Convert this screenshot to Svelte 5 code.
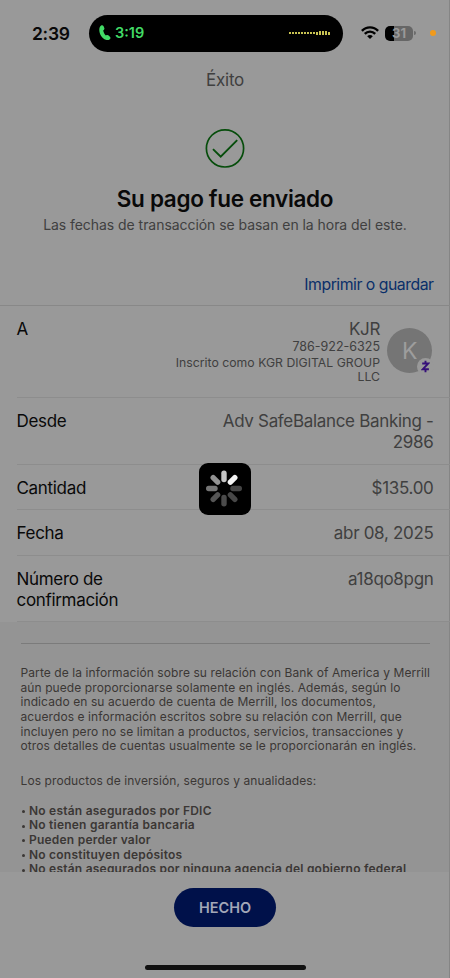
<script>
  const bars = [2, 2, 2, 2, 2, 2, 2, 2.4, 2.4, 3, 3.6, 3.6, 3.4, 3];
  const spokes = ['#c4c4c4', '#f4f4f4', '#444', '#474747', '#4b4b4b', '#555', '#757575', '#929292'];
  const rows = [
    { label: ['Desde'], value: ['Adv SafeBalance Banking -', '2986'], height: 67 },
    { label: ['Cantidad'], value: ['$135.00'], height: 45 },
    { label: ['Fecha'], value: ['abr 08, 2025'], height: 46 },
    { label: ['Número de', 'confirmación'], value: ['a18qo8pgn'], height: 66 }
  ];
  const legal = [
    'Parte de la información sobre su relación con Bank of America y Merrill',
    'aún puede proporcionarse solamente en inglés. Además, según lo',
    'indicado en su acuerdo de cuenta de Merrill, los documentos,',
    'acuerdos e información escritos sobre su relación con Merrill, que',
    'incluyen pero no se limitan a productos, servicios, transacciones y',
    'otros detalles de cuentas usualmente se le proporcionarán en inglés.'
  ];
  const notices = [
    'No están asegurados por FDIC',
    'No tienen garantía bancaria',
    'Pueden perder valor',
    'No constituyen depósitos',
    'No están asegurados por ninguna agencia del gobierno federal'
  ];
</script>

<div class="screen">
  <header class="status">
    <span class="clock">2:39</span>
    <div class="island">
      <svg class="phone" width="12" height="16" viewBox="0 0 12 16">
        <path d="M2.1.6C3-.1 4.1.2 4.6 1.2l.7 1.7c.3.8.1 1.5-.5 2l-.6.5c.3 1.8 1.3 3.7 2.7 5l.8-.3c.7-.3 1.4-.1 1.9.4l1.3 1.3c.8.8.7 1.8-.1 2.4-1 .8-2.500 1.200-4 .6C3 13.300.5 9.500.3 5.200.2 3.200.8 1.500 2.100.6Z" fill="#42db66" />
      </svg>
      <span class="call">3:19</span>
      <div class="wave">
        {#each bars as h}<i style="height: {h}px"></i>{/each}
      </div>
    </div>
    <svg class="wifi" width="18" height="14" viewBox="0 0 18 14" fill="none" stroke="#000" stroke-width="2.4">
      <path d="M.9 4.900C5.400.2 12.600.2 17.100 4.900" />
      <path d="M3.800 7.900c2.900-3.000 7.500-3.000 10.400 0" />
      <path d="M6.200 10.200c1.600-1.500 4-1.500 5.600 0L9 13.100Z" fill="#000" stroke="none" />
    </svg>
    <div class="battery"><span>31</span></div>
    <i class="nub"></i>
    <i class="mic"></i>
  </header>

  <div class="title">Éxito</div>

  <section class="hero">
    <svg width="40" height="40" viewBox="0 0 40 40" fill="none" stroke="#064d0b">
      <circle cx="20" cy="20.400" r="18.600" stroke-width="1.700" />
      <path d="M8 21.100 15.700 28.700 32.200 12.200" stroke-width="1.900" />
    </svg>
    <h1>Su pago fue enviado</h1>
    <p>Las fechas de transacción se basan en la hora del este.</p>
  </section>

  <div class="print"><span>Imprimir o guardar</span></div>

  <section class="details">
    <div class="payee">
      <div class="label">A</div>
      <div class="who">
        <div class="name">KJR</div>
        <div class="tel">786-922-6325</div>
        <div class="enrolled">Inscrito como KGR DIGITAL GROUP<br />LLC</div>
      </div>
      <div class="avatar">
        <span>K</span>
        <div class="zelle">
          <svg width="9" height="13" viewBox="0 0 9 13" fill="none" stroke="#36107a" stroke-width="1.900">
            <path d="M1.200 3.500H7.300L1.700 9.300H7.900" />
            <path d="M4.500.8V3.400M4.500 9.400V12.200" />
          </svg>
        </div>
      </div>
    </div>
    {#each rows as row}
      <div class="row" style="height: {row.height}px">
        <div class="label">{#each row.label as line}<div>{line}</div>{/each}</div>
        <div class="value">{#each row.value as line}<div>{line}</div>{/each}</div>
      </div>
    {/each}
  </section>

  <section class="legal">
    <div class="rule"></div>
    <div class="para">{#each legal as line}<div>{line}</div>{/each}</div>
    <div class="intro">Los productos de inversión, seguros y anualidades:</div>
    <ul>
      {#each notices as n}<li><i></i>{n}</li>{/each}
    </ul>
  </section>

  <footer>
    <button>HECHO</button>
    <div class="home"></div>
  </footer>

  <div class="spinner">
    <svg width="52" height="52" viewBox="0 0 52 52" stroke-width="5.400" stroke-linecap="round">
      {#each spokes as color, i}
        <line x1="25" y1="16.500" x2="25" y2="10.200" stroke={color} transform="rotate({i * 45} 25 25.500)" />
      {/each}
    </svg>
  </div>
</div>

<style>
  .screen {
    position: relative;
    box-sizing: border-box;
    width: 450px;
    height: 978px;
    overflow: hidden;
    display: flex;
    flex-direction: column;
    background: #999;
    color: #090909;
    font-family: Inter, 'Liberation Sans', sans-serif;
    box-shadow: inset -1px 0 #858585;
  }
  .status {
    height: 66px;
    flex: none;
    display: flex;
    align-items: center;
    box-sizing: border-box;
    padding-left: 32px;
  }
  .clock {
    width: 57px;
    font-size: 17.500px;
    font-weight: 600;
    letter-spacing: -0.3px;
    flex: none;
  }
  .island {
    width: 254px;
    height: 37px;
    border-radius: 19px;
    background: #000;
    display: flex;
    align-items: center;
    box-sizing: border-box;
    padding: 0 13px 0 10px;
    flex: none;
  }
  .call {
    margin: -1px 0 0 4px;
    color: #42db66;
    font-size: 14.500px;
    font-weight: 600;
  }
  .wave {
    margin-left: auto;
    display: flex;
    align-items: center;
    gap: 1px;
  }
  .wave i {
    width: 2px;
    background: #c9c353;
  }
  .wifi {
    margin-left: 18px;
    flex: none;
  }
  .battery {
    margin-left: 6px;
    width: 28px;
    height: 15px;
    border-radius: 5px;
    background: linear-gradient(90deg, #000 8.500px, #666 8.500px);
    color: #999;
    font-size: 13px;
    font-weight: 700;
    line-height: 15px;
    text-align: center;
    flex: none;
  }
  .nub {
    margin-left: 1px;
    width: 1.500px;
    height: 4px;
    border-radius: 0 2px 2px 0;
    background: #6b6b6b;
  }
  .mic {
    margin-left: 14px;
    width: 6px;
    height: 6px;
    border-radius: 50%;
    background: #f09a1c;
  }
  .title {
    height: 30px;
    line-height: 29px;
    text-align: center;
    font-size: 17px;
    letter-spacing: -0.2px;
    color: #404040;
  }
  .hero {
    height: 176px;
    flex: none;
    padding-top: 32px;
    box-sizing: border-box;
    display: flex;
    flex-direction: column;
    align-items: center;
  }
  h1 {
    margin: 15.500px 0 0;
    font-size: 22.500px;
    line-height: 30px;
    font-weight: 600;
    letter-spacing: -0.330px;
    white-space: nowrap;
  }
  .hero p {
    margin: 1.500px 0 0;
    font-size: 14px;
    line-height: 20px;
    letter-spacing: -0.050px;
    color: #404040;
    white-space: nowrap;
  }
  .print {
    height: 33px;
    flex: none;
    line-height: 25px;
    padding-right: 16.500px;
    text-align: right;
    font-size: 15.800px;
    letter-spacing: -0.480px;
    color: #0a2f69;
    border-bottom: 1px solid #888;
  }
  .details {
    flex: none;
    font-size: 17px;
    line-height: 20.500px;
    letter-spacing: -0.320px;
  }
  .payee {
    height: 92px;
    box-sizing: border-box;
    margin-left: 16.500px;
    padding: 12.500px 18px 0 0;
    display: flex;
    border-bottom: 1px solid #8d8d8d;
  }
  .who {
    margin-left: auto;
    text-align: right;
    color: #404040;
    white-space: nowrap;
  }
  .tel {
    font-size: 12.500px;
    line-height: 16px;
    letter-spacing: 0;
  }
  .enrolled {
    margin-top: 0.500px;
    font-size: 12.250px;
    line-height: 14.500px;
    letter-spacing: 0;
  }
  .avatar {
    position: relative;
    margin: 9.500px 0 0 7px;
    width: 45px;
    height: 45px;
    border-radius: 50%;
    background: #757575;
    color: #9d9d9d;
    font-size: 23px;
    line-height: 46px;
    text-align: center;
    flex: none;
  }
  .zelle {
    position: absolute;
    left: 30px;
    top: 30px;
    width: 17px;
    height: 17px;
    border-radius: 50%;
    background: #999;
    display: flex;
    align-items: center;
    justify-content: center;
  }
  .row {
    box-sizing: border-box;
    margin-left: 16.500px;
    padding: 13px 16.500px 0 0;
    display: flex;
    justify-content: space-between;
    border-bottom: 1px solid #8d8d8d;
    white-space: nowrap;
  }
  .value {
    color: #404040;
    text-align: right;
  }
  .legal {
    flex: none;
    height: 250px;
    overflow: hidden;
    box-sizing: border-box;
    padding: 21px 20.500px 0;
    background: #949494;
    color: #3b3735;
    font-size: 12px;
    line-height: 14.650px;
    letter-spacing: 0.090px;
    white-space: nowrap;
    box-shadow: inset -1px 0 #858585;
  }
  .rule {
    height: 1px;
    background: #7b7b7b;
  }
  .para {
    margin-top: 22px;
  }
  .intro {
    margin-top: 20px;
  }
  ul {
    list-style: none;
    margin: 15px 0 0;
    padding: 0;
    font-weight: 600;
    letter-spacing: 0.220px;
  }
  li {
    display: flex;
    align-items: center;
  }
  li i {
    width: 3px;
    height: 3px;
    border-radius: 50%;
    background: #3b3735;
    margin: 1px 4px 0 1.500px;
  }
  footer {
    flex: 1;
    display: flex;
    flex-direction: column;
    align-items: center;
    padding-top: 16px;
  }
  button {
    width: 102px;
    height: 39px;
    border: 0;
    border-radius: 20px;
    background: #00114a;
    color: #a3a7b8;
    font: 600 14.500px Inter, sans-serif;
    padding: 0;
  }
  .home {
    margin-top: 38px;
    width: 161px;
    height: 5px;
    border-radius: 3px;
    background: #111;
  }
  .spinner {
    position: absolute;
    left: 199px;
    top: 463px;
    width: 52px;
    height: 52px;
    border-radius: 9px;
    background: #000;
  }
</style>
